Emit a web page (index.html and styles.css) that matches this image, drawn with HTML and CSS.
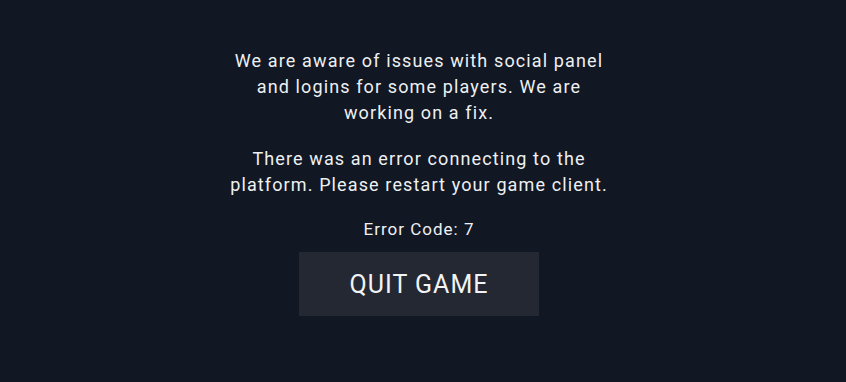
FILE: index.html
```html
<!DOCTYPE html>
<html>
<head>
<meta charset="utf-8">
<link rel="stylesheet" href="styles.css">
</head>
<body>
<main class="screen">
  <div class="panel">
    <p class="msg">We are aware of issues with social panel and logins for some players. We are working on a fix.</p>
    <p class="msg">There was an error connecting to the platform. Please restart your game client.</p>
    <p class="code">Error Code: 7</p>
    <button class="quit">QUIT GAME</button>
  </div>
</main>
</body>
</html>
```
FILE: styles.css
```css
html, body { margin: 0; padding: 0; }
body {
  background: #111723;
  color: #eef0f2;
  font-family: Roboto, "Noto Sans", sans-serif;
  width: 846px;
  height: 382px;
  overflow: hidden;
}
.screen {
  display: flex;
  justify-content: center;
  padding: 48px 8px 0 0;
}
.panel {
  width: 388px;
  display: flex;
  flex-direction: column;
  align-items: center;
  text-align: center;
}
.msg {
  margin: 0 0 20px;
  font-size: 18px;
  line-height: 26px;
  letter-spacing: 1.12px;
}
.code {
  margin: 0 0 12px;
  font-size: 17px;
  line-height: 22px;
  letter-spacing: 1px;
}
.quit {
  width: 240px;
  height: 64px;
  border: 0;
  background: #242833;
  color: #f2f3f5;
  font-family: inherit;
  font-size: 25px;
  letter-spacing: 1px;
  cursor: pointer;
}
```
